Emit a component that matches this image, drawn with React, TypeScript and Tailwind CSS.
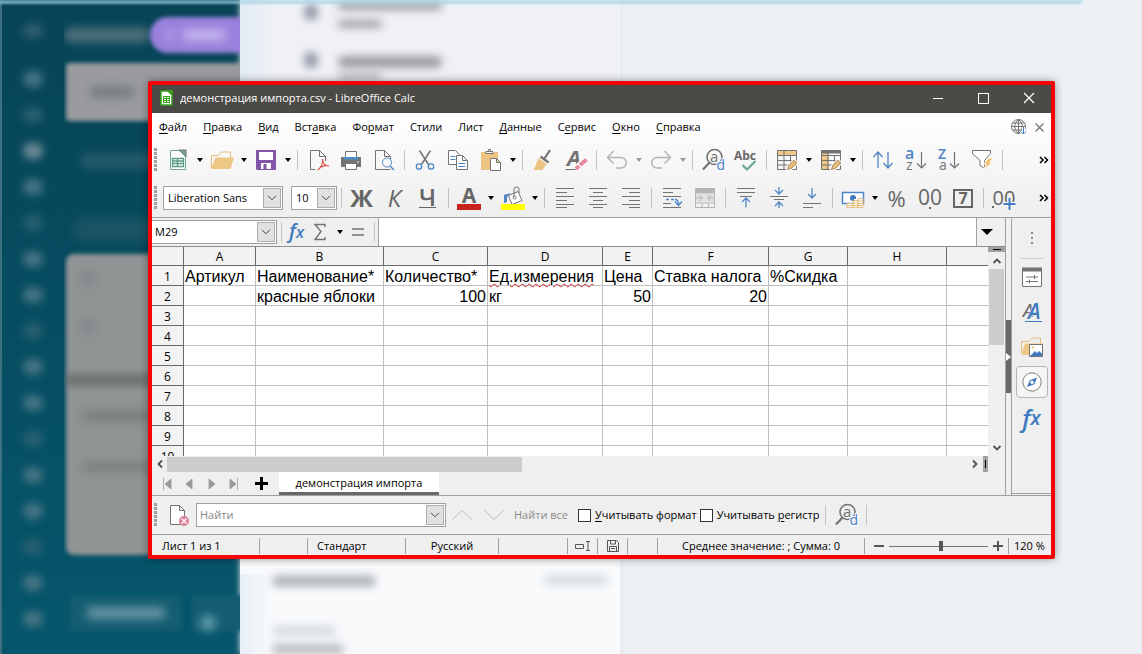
import type { ReactNode } from 'react';
import clsx from 'clsx';

const menus = [
  ['', 'Ф', 'айл'],
  ['', 'П', 'равка'],
  ['', 'В', 'ид'],
  ['Вст', 'а', 'вка'],
  ['Фо', 'р', 'мат'],
  ['Стили', '', ''],
  ['Лист', '', ''],
  ['', 'Д', 'анные'],
  ['С', 'е', 'рвис'],
  ['', 'О', 'кно'],
  ['', 'С', 'правка'],
];

const columns = ['A', 'B', 'C', 'D', 'E', 'F', 'G', 'H', ''];

const rows: Array<Array<string | number>> = [
  ['Артикул', 'Наименование*', 'Количество*', 'Ед.измерения', 'Цена', 'Ставка налога', '%Скидка', '', ''],
  ['', 'красные яблоки', 100, 'кг', 50, 20, '', '', ''],
  ...Array.from({ length: 8 }, () => Array(9).fill('')),
];

interface IconProps {
  children: ReactNode;
  box?: string;
  className?: string;
}

function Icon({ children, box = '0 0 24 24', className = 'size-6' }: IconProps) {
  return (
    <svg viewBox={box} className={clsx('shrink-0 overflow-visible', className)} fill="none" stroke="#737373" aria-hidden="true">
      {children}
    </svg>
  );
}

function Caret({ disabled }: { disabled?: boolean }) {
  return (
    <svg viewBox="0 0 6 4" className="h-1 w-1.5" aria-hidden="true">
      <path d="M0 0h6L3 4z" fill={disabled ? '#9a9a9a' : '#000'} />
    </svg>
  );
}

interface ToolProps {
  label: string;
  children: ReactNode;
  menu?: boolean;
  disabled?: boolean;
}

function Tool({ label, children, menu, disabled }: ToolProps) {
  return (
    <div className="flex shrink-0">
      <button type="button" aria-label={label} disabled={disabled} className="flex h-8 w-[33px] items-center justify-center">
        {children}
      </button>
      {menu && (
        <button type="button" aria-label={`${label}: меню`} disabled={disabled} className="flex h-8 w-[11px] items-center justify-center">
          <Caret disabled={disabled} />
        </button>
      )}
    </div>
  );
}

function Separator() {
  return (
    <div className="flex w-2 shrink-0 justify-center">
      <div className="h-5 w-px bg-[#c3c3c3]" />
    </div>
  );
}

function Grip() {
  return (
    <div className="flex w-[9px] shrink-0 pl-0.5">
      <div className="h-6 w-[3px] bg-[repeating-linear-gradient(#a0a0a0_0_3px,transparent_3px_4px)]" />
    </div>
  );
}

function DropArrow() {
  return (
    <span className="pointer-events-none flex h-5 w-[18px] items-center justify-center border border-[#adadad] bg-[#e1e1e1]">
      <svg viewBox="0 0 10 6" className="h-1.5 w-2.5" fill="none" stroke="#444" aria-hidden="true">
        <path d="M1 .8l4 4 4-4" />
      </svg>
    </span>
  );
}

function Combo({ label, value, className }: { label: string; value: string; className: string }) {
  return (
    <div className={clsx('relative flex h-6 shrink-0 items-center border border-[#a0a0a0] bg-white', className)}>
      <select aria-label={label} defaultValue={value} className="h-full w-full appearance-none bg-transparent pl-1 outline-none">
        <option>{value}</option>
      </select>
      <span className="pointer-events-none absolute right-px">
        <DropArrow />
      </span>
    </div>
  );
}

function FindReplaceIcon() {
  return (
    <Icon>
      <circle cx="13.500" cy="9" r="7.500" strokeWidth="1.600" />
      <path d="M8.500 14.500L2 21.500" strokeWidth="2.200" />
      <text x="9" y="13.500" fontSize="15" fill="#737373" stroke="none" className="font-['Open_Sans',sans-serif]">a</text>
      <text x="15.500" y="22" fontSize="14" fill="#3f7ac0" stroke="#fff" strokeWidth="2" paintOrder="stroke" className="font-['Open_Sans',sans-serif]">d</text>
    </Icon>
  );
}

function TableEditIcon({ column }: { column?: boolean }) {
  return (
    <Icon>
      {column ? <path d="M2 3h8v19H2z" fill="#ecc785" stroke="none" /> : <path d="M2 3h20v4H2z" fill="#ecc785" stroke="none" />}
      {column && <path d="M2 2.500h20v3H2z" fill="#737373" stroke="none" />}
      <path d="M2.500 2.500h19v19h-19zM2.500 7.500h19M2.500 12.500h19M2.500 17h19M9 3v18.500M15.500 7v14.500" />
      <path d="M12 22l1.500-5 5.500-5.500 3.500 3.500-5.500 5.500z" fill="#ecc785" stroke="#fff" strokeWidth="2" paintOrder="stroke" />
      <path d="M12.500 21.500l1.200-4 5.300-5.300 2.800 2.800-5.300 5.300z" fill="#e8bd7b" stroke="#8b7862" strokeWidth=".7" />
    </Icon>
  );
}

function SortLetters({ first, second, size }: { first: string; second: string; size: number }) {
  return (
    <Icon>
      <text x="1" y="11" fontSize={size} fontWeight="600" fill="#4e86c6" stroke="none" className="font-['Open_Sans',sans-serif]">{first}</text>
      <text x="2" y="22" fontSize="14" fill="#737373" stroke="none" className="font-['Open_Sans',sans-serif]">{second}</text>
      <path d="M17.500 4v16M13 15.500l4.500 4.500 4.500-4.500" strokeWidth="1.200" />
    </Icon>
  );
}

const lines = {
  left: 'M3 2.500h18M3 6.500h11M3 10.500h18M3 14.500h11M3 18.500h18M3 21.500h11',
  center: 'M3 2.500h18M7 6.500h10M3 10.500h18M7 14.500h10M3 18.500h18M7 21.500h10',
  right: 'M3 2.500h18M10 6.500h11M3 10.500h18M10 14.500h11M3 18.500h18M10 21.500h11',
};

function Lines({ align }: { align: keyof typeof lines }) {
  return (
    <Icon>
      <path d={lines[align]} />
    </Icon>
  );
}

function TitleBar() {
  return (
    <header className="flex h-7 items-center bg-[#4b4a46] pb-0.5 pl-2 text-white">
      <svg viewBox="0 0 13 16" className="h-4 w-[13px]" aria-hidden="true">
        <path d="M1 1h7l4 4v10H1z" fill="#fff" stroke="#37a41c" strokeWidth="1.500" />
        <path d="M8 0h5v5z" fill="#37a41c" />
        <path d="M3 6.500h7M3 8.500h7M3 10.500h7M3 12.500h7M3.500 6v7M6.500 6v7M9.500 6v7" stroke="#37a41c" />
      </svg>
      <h1 className="ml-[7px] flex-1 truncate">демонстрация импорта.csv - LibreOffice Calc</h1>
      <div className="flex h-full">
        <button type="button" aria-label="Свернуть" className="flex w-[45px] items-center justify-center">
          <span className="h-px w-2.5 bg-white" />
        </button>
        <button type="button" aria-label="Развернуть" className="flex w-[46px] items-center justify-center">
          <span className="size-[11px] border border-white" />
        </button>
        <button type="button" aria-label="Закрыть" className="flex w-[45px] items-center justify-center">
          <Icon box="0 0 10 10" className="size-2.5"><path d="M0 0l10 10M10 0L0 10" stroke="#fff" strokeWidth="1.200" /></Icon>
        </button>
      </div>
    </header>
  );
}

function MenuBar() {
  return (
    <nav className="flex h-7 items-center pl-[7px]">
      <div className="flex flex-1 gap-4">
        {menus.map(([before, key, after]) => (
          <button type="button" key={before + key + after}>
            {before}
            <span className="underline underline-offset-2">{key}</span>
            {after}
          </button>
        ))}
      </div>
      <button type="button" aria-label="Обновление">
        <Icon box="0 0 16 16" className="size-4">
          <circle cx="7.500" cy="7.500" r="7" />
          <path d="M.5 7.500h14M7.500.5v14M1.500 4h12M1.500 11h9M7.500.5c-5 4-5 10 0 14M7.500.5c5 4 5 10 0 14" />
          <path d="M12.500 8v7M10 12.500l2.500 2.500 2.500-2.500" stroke="#fff" strokeWidth="3" />
          <path d="M12.500 8v7M10 12.500l2.500 2.500 2.500-2.500" stroke="#3f7ac0" />
        </Icon>
      </button>
      <button type="button" aria-label="Закрыть документ" className="mr-[7px] ml-2">
        <Icon box="0 0 9 9" className="size-[9px]"><path d="M.5.5l8 8M8.500.5l-8 8" strokeWidth="1.200" /></Icon>
      </button>
    </nav>
  );
}

function OverflowButton() {
  return (
    <button type="button" aria-label="Ещё" className="mr-0.5 ml-auto">
      <Icon box="0 0 10 8" className="h-2 w-2.5">
        <path d="M1 1l3 3-3 3M5.500 1l3 3-3 3" stroke="#000" strokeWidth="1.500" />
      </Icon>
    </button>
  );
}

function StandardToolbar() {
  return (
    <div className="flex h-[37px] items-center">
      <Grip />
      <Tool label="Создать" menu>
        <Icon>
          <path d="M4.500 2.500h9l6 6v13h-15z" fill="#fff" stroke="#6fa793" />
          <path d="M13 2h7v7z" fill="#6fa793" />
          <path d="M6.500 10.500h11v8h-11zM7 13h10M7 15.500h10M11.500 11v7" stroke="#5c9b84" strokeWidth="1.300" />
        </Icon>
      </Tool>
      <Tool label="Открыть" menu>
        <Icon>
          <path d="M1.500 20V7.500h7l3-3.500h9v6" stroke="#e5bd7c" />
          <path d="M5.500 9.500H24L20.500 21H1z" fill="#edc785" stroke="none" />
        </Icon>
      </Tool>
      <Tool label="Сохранить" menu>
        <Icon>
          <path d="M2 2h20v20H3l-1-1z" fill="#8357a8" stroke="none" />
          <path d="M5 4h14v8H5zM7 15h10v6H7z" fill="#fff" stroke="none" />
          <path d="M9.500 16h3v5h-3z" fill="#8357a8" stroke="none" />
        </Icon>
      </Tool>
      <Separator />
      <Tool label="Экспорт в PDF">
        <Icon>
          <path d="M9 21.500H4.500v-19h9l6 6V13M13.500 2.500v6h6" />
          <path d="M12 22c3.500-3 5-7 4.500-11 .5 5 3 7 6.500 7-4-1-8 0-11 4z" stroke="#e2574c" strokeWidth="1.200" />
        </Icon>
      </Tool>
      <Tool label="Печать">
        <Icon>
          <path d="M2 9h20v10H2z" fill="#737373" stroke="none" />
          <path d="M6.500 10V3.500h11V10M6.500 15.500h11v6h-11z" fill="#fff" />
          <path d="M5 9h14v2.500H5z" fill="#4d8fcc" stroke="none" />
          <path d="M18 14h2" stroke="#fff" />
        </Icon>
      </Tool>
      <Tool label="Просмотр печати">
        <Icon>
          <path d="M18.500 21.500h-15v-19h9l6 6V11M12.500 2.500v6h6" />
          <circle cx="15" cy="14.500" r="4.500" fill="#f6f9fd" stroke="#4e86c6" />
          <path d="M18 18l4 4" stroke="#4e86c6" strokeWidth="1.500" />
        </Icon>
      </Tool>
      <Separator />
      <Tool label="Вырезать">
        <Icon>
          <path d="M6.500 2.500l9 14M17.500 2.500l-9 14" strokeWidth="1.500" />
          <circle cx="6" cy="18.500" r="2.700" stroke="#4e86c6" strokeWidth="1.300" />
          <circle cx="18" cy="18.500" r="2.700" stroke="#4e86c6" strokeWidth="1.300" />
        </Icon>
      </Tool>
      <Tool label="Копировать">
        <Icon>
          <path d="M2.500 2.500h7l4 4v10h-11z" fill="#fff" />
          <path d="M4.500 8.500h5M4.500 11.500h5" stroke="#4e86c6" />
          <path d="M10.500 7.500h6l5 5v9h-11zM16.500 7.500v5h5" fill="#fff" />
          <path d="M12.500 15.500h7M12.500 18.500h7" stroke="#4e86c6" />
        </Icon>
      </Tool>
      <Tool label="Вставить" menu>
        <Icon>
          <path d="M2 4h17v18H2z" fill="#ecc383" stroke="none" />
          <path d="M7 5.500V3.500h7v2zM9.500 3V1.500h2V3" fill="#fff" />
          <path d="M11.500 10.500h6l4 4v8h-10zM17.500 10.500v4h4" fill="#fff" />
        </Icon>
      </Tool>
      <Separator />
      <Tool label="Копировать форматирование">
        <Icon>
          <path d="M19 2l-5.500 8.500M9.500 8.500l8 6" strokeWidth="2.200" />
          <path d="M7.500 10l8 6-4 6H2.500c2-3 3-8 5-12z" fill="#ecc383" stroke="none" />
        </Icon>
      </Tool>
      <Tool label="Очистить форматирование">
        <Icon>
          <path d="M1.500 21.500h10" />
          <text x="3" y="18" fontSize="22" fontWeight="700" fontStyle="italic" fill="#737373" stroke="none" className="font-['Open_Sans',sans-serif]">A</text>
          <path d="M12 20.500l9-8.500" stroke="#fff" strokeWidth="6" />
          <path d="M12 21l3-3M16 17l6.500-5.500" stroke="#e88b9b" strokeWidth="4" />
        </Icon>
      </Tool>
      <Separator />
      <Tool label="Отменить" menu disabled>
        <Icon><path d="M8.500 3L2.500 9.500l6 6M3 9.500h13a5 5 0 0 1 0 10.500h-5" stroke="#b4b4b4" strokeWidth="1.500" /></Icon>
      </Tool>
      <Tool label="Вернуть" menu disabled>
        <Icon><path d="M15.500 3l6 6.500-6 6M21 9.500H8A5 5 0 0 0 8 20h5" stroke="#b4b4b4" strokeWidth="1.500" /></Icon>
      </Tool>
      <Separator />
      <Tool label="Найти и заменить"><FindReplaceIcon /></Tool>
      <Tool label="Проверка орфографии">
        <Icon>
          <text x="0" y="12" fontSize="12" fontWeight="700" fill="#666" stroke="none" className="font-['Open_Sans',sans-serif]">Abc</text>
          <path d="M8.500 17l4.500 4.500L21.500 13" stroke="#6fa793" strokeWidth="2.200" />
        </Icon>
      </Tool>
      <Separator />
      <Tool label="Строка" menu><TableEditIcon /></Tool>
      <Tool label="Столбец" menu><TableEditIcon column /></Tool>
      <Separator />
      <Tool label="Сортировка">
        <Icon><path d="M7 20V4M2.500 9L7 4l4.500 5M17 4v16M12.500 15l4.500 5 4.500-5" stroke="#4e86c6" strokeWidth="1.300" /></Icon>
      </Tool>
      <Tool label="По возрастанию"><SortLetters first="a" second="z" size={16} /></Tool>
      <Tool label="По убыванию"><SortLetters first="Z" second="a" size={14} /></Tool>
      <Tool label="Автофильтр">
        <Icon>
          <path d="M2.500 2.500h18v3l-6 7v8l-4.500-3v-5l-7.500-7z" fill="#fff" />
          <path d="M19 10h4l-3.500 4.500h3L12.500 22.500l4-6.500h-3z" fill="#efbf68" stroke="#fff" strokeWidth=".8" />
        </Icon>
      </Tool>
      <Separator />
      <OverflowButton />
    </div>
  );
}

function FormattingToolbar() {
  return (
    <div className="flex h-10 items-center border-b border-[#a0a0a0]">
      <Grip />
      <Combo label="Шрифт" value="Liberation Sans" className="ml-0.5 w-[120px]" />
      <Combo label="Размер" value="10" className="ml-2 w-[46px]" />
      <Separator />
      <Tool label="Полужирный"><span className="text-2xl leading-none font-bold text-[#666]">Ж</span></Tool>
      <Tool label="Курсив"><span className="text-2xl leading-none font-medium text-[#666] italic">К</span></Tool>
      <Tool label="Подчёркнутый"><span className="border-b border-[#666] text-2xl leading-5 font-semibold text-[#666]">Ч</span></Tool>
      <Separator />
      <Tool label="Цвет шрифта" menu>
        <Icon>
          <text x="12" y="17" fontSize="21" fontWeight="700" fill="#666" stroke="none" textAnchor="middle" className="font-['Open_Sans',sans-serif]">A</text>
          <path d="M0 18h24v6H0z" fill="#c9211e" stroke="none" />
        </Icon>
      </Tool>
      <Tool label="Цвет фона" menu>
        <Icon>
          <path d="M3 17V9l7-2-4 4v5z" fill="#4e86c6" stroke="none" />
          <path d="M7.500 9.500L17 5.500l4 9-10 4z" fill="#fff" />
          <path d="M13 11V4a2.500 2.500 0 0 1 5-1v4" />
          <circle cx="13.500" cy="11.500" r="1.500" />
          <path d="M0 18h24v6H0z" fill="#ff0" stroke="none" />
        </Icon>
      </Tool>
      <Separator />
      <Tool label="По левому краю"><Lines align="left" /></Tool>
      <Tool label="По центру"><Lines align="center" /></Tool>
      <Tool label="По правому краю"><Lines align="right" /></Tool>
      <Separator />
      <Tool label="Перенос текста">
        <Icon>
          <path d="M3 2.500h18M3 6.500h10M3 10.500h18M3 17.500h8M3 21.500h18" />
          <path d="M6 13.500h3M11 13.500h3M15 13.500c3 0 3.500 2 3.500 5M15 15.500l3.500 4 3.500-4" stroke="#4e86c6" strokeWidth="1.300" />
        </Icon>
      </Tool>
      <Tool label="Объединить ячейки" disabled>
        <Icon>
          <path d="M2 2.500h20V7H2z" fill="#b5b5b5" stroke="none" />
          <path d="M2.500 2.500h19v19h-19zM2.500 7h19M2.500 17h19M9 17v4.500M15.500 17v4.500M9 3v4M15.500 3v4" stroke="#b5b5b5" />
          <path d="M3 8h18v8H3z" fill="#e2e2e2" stroke="none" />
          <path d="M3 12h6M6.500 9L9.500 12l-3 3M21 12h-6M17.500 9l-3 3 3 3" stroke="#b0b0b0" />
        </Icon>
      </Tool>
      <Separator />
      <Tool label="По верхнему краю">
        <Icon><path d="M3 2.500h18M3 6.500h18M6 10.500h12" /><path d="M12 21.500v-9M8 16l4-4 4 4" stroke="#4e86c6" strokeWidth="1.300" /></Icon>
      </Tool>
      <Tool label="По середине">
        <Icon><path d="M3 10.500h18M7 13.500h10" /><path d="M12 1v7M8 4l4 4 4-4M12 22v-6M8 20l4-4 4 4" stroke="#4e86c6" strokeWidth="1.300" /></Icon>
      </Tool>
      <Tool label="По нижнему краю">
        <Icon><path d="M3 17.500h18M3 21.500h10" /><path d="M12 2v10M8 8l4 4 4-4" stroke="#4e86c6" strokeWidth="1.300" /></Icon>
      </Tool>
      <Separator />
      <Tool label="Денежный" menu>
        <Icon>
          <path d="M1.500 6.500h21v11h-21z" fill="#fff" stroke="#4e86c6" strokeWidth="1.500" />
          <circle cx="12" cy="12" r="3" fill="#3f7ac0" stroke="none" />
          <path d="M13 13h9v9H6v-5h7z" fill="#fff" stroke="none" />
          <path d="M6 17.500h6v4H6zM6 19.500h6M12.500 14.500h4v7h-4zM12.500 17h4M12.500 19.500h4M17 12.500h5v9h-5zM17 15h5M17 17.500h5M17 19.500h5" stroke="#e5bd7c" />
        </Icon>
      </Tool>
      <Tool label="Процентный"><span className="text-[22px] leading-none font-medium text-[#666]">%</span></Tool>
      <Tool label="Числовой">
        <Icon>
          <text x="12" y="19" fontSize="21" fill="#666" stroke="none" textAnchor="middle" className="font-['Open_Sans',sans-serif]">00</text>
          <path d="M11 21h2v2h-2z" fill="#666" stroke="none" />
        </Icon>
      </Tool>
      <Tool label="Дата">
        <Icon>
          <path d="M3 4h18v17H3z" strokeWidth="2" stroke="#666" />
          <text x="12" y="18" fontSize="16" fontWeight="700" fill="#666" stroke="none" textAnchor="middle" className="font-['Open_Sans',sans-serif]">7</text>
        </Icon>
      </Tool>
      <Separator />
      <Tool label="Добавить разряд">
        <Icon>
          <text x="12" y="19" fontSize="20" fill="#666" stroke="none" textAnchor="middle" className="font-['Open_Sans',sans-serif]">00</text>
          <path d="M0 20h2v2H0z" fill="#666" stroke="none" />
          <path d="M17.500 12v12M11.500 18h12" stroke="#fff" strokeWidth="4" />
          <path d="M17.500 12v12M11.500 18h12" stroke="#3f7ac0" strokeWidth="2" />
        </Icon>
      </Tool>
      <OverflowButton />
    </div>
  );
}

function FormulaBar() {
  return (
    <div className="flex h-[29px] items-center border-b border-[#8f8f8f]">
      <div className="relative flex h-6 w-[125px] shrink-0 items-center border border-l-0 border-[#a0a0a0] bg-white">
        <input aria-label="Имя ячейки" defaultValue="M29" className="w-full bg-transparent pl-[3px] outline-none" />
        <button type="button" aria-label="Список имён" className="absolute right-px">
          <DropArrow />
        </button>
      </div>
      <Separator />
      <button type="button" aria-label="Мастер функций" className="w-[23px] text-xl leading-none font-semibold text-[#3f7ac0] italic">
        f<span className="text-base">x</span>
      </button>
      <button type="button" aria-label="Сумма" className="flex w-6 justify-center">
        <Icon box="0 0 14 18" className="h-[18px] w-3.5"><path d="M12 4V1.500H2l6 7-6 8h10V14" strokeWidth="1.400" /></Icon>
      </button>
      <button type="button" aria-label="Сумма: меню" className="flex w-4 justify-center"><Caret /></button>
      <button type="button" aria-label="Формула" className="flex w-5 justify-center">
        <Icon box="0 0 12 8" className="h-2 w-3"><path d="M0 1h12M0 7h12" strokeWidth="1.600" /></Icon>
      </button>
      <div className="ml-0.5"><Separator /></div>
      <input aria-label="Строка ввода" className="h-full min-w-0 flex-1 border-x border-[#a0a0a0] bg-white px-1 outline-none" />
      <button type="button" aria-label="Развернуть строку ввода" className="flex w-7 pl-1">
        <svg viewBox="0 0 10 5" className="h-1.5 w-3" aria-hidden="true"><path d="M0 0h10L5 5z" /></svg>
      </button>
    </div>
  );
}

function Sheet() {
  return (
    <div className="min-w-0 flex-1 overflow-hidden bg-white">
      <table className="w-full table-fixed border-separate border-spacing-0 text-xs">
        <colgroup>
          <col className="w-8" />
          <col className="w-[72px]" />
          <col className="w-[128px]" />
          <col className="w-[104px]" />
          <col className="w-[115px]" />
          <col className="w-[50px]" />
          <col className="w-[116px]" />
          <col className="w-[79px]" />
          <col className="w-[99px]" />
          <col />
        </colgroup>
        <thead>
          <tr className="h-[19px] bg-[#f2f2f2]">
            <th className="border-r border-b border-[#696969] p-0" />
            {columns.map((name, i) => (
              <th key={i} className={clsx('border-b border-[#696969] p-0 pt-0.5 leading-4 font-normal', name && 'border-r')}>
                {name}
              </th>
            ))}
          </tr>
        </thead>
        <tbody>
          {rows.map((cells, r) => (
            <tr key={r} className="h-5">
              <th className="border-r border-b border-[#696969] bg-[#f2f2f2] p-0 pt-0.5 leading-[17px] font-normal">{r + 1}</th>
              {cells.map((cell, c) => (
                <td
                  key={c}
                  className={clsx(
                    "border-b border-[#c0c0c0] p-0 px-px pt-0.5 font-['Liberation_Sans',sans-serif] text-base leading-[17px] whitespace-nowrap",
                    c < 8 && 'border-r',
                    typeof cell === 'number' && 'text-right',
                  )}
                >
                  {cell === 'Ед.измерения' ? (
                    <span className="underline decoration-[#d02020] decoration-wavy decoration-1 underline-offset-1">{cell}</span>
                  ) : (
                    cell
                  )}
                </td>
              ))}
            </tr>
          ))}
        </tbody>
      </table>
    </div>
  );
}

function Chevron({ d }: { d: string }) {
  return (
    <Icon box="0 0 8 8" className="size-2"><path d={d} stroke="#505050" strokeWidth="1.800" /></Icon>
  );
}

function VerticalScroll() {
  return (
    <div className="flex w-[17px] shrink-0 flex-col items-center">
      <div className="flex h-[5px] w-full items-center justify-center bg-[#a0a0a0]"><span className="h-px w-2 bg-black" /></div>
      <button type="button" aria-label="Вверх" className="flex h-[17px] items-center"><Chevron d="M.5 6L4 2.500 7.500 6" /></button>
      <div className="h-[76px] w-[15px] bg-[#cdcdcd]" />
      <button type="button" aria-label="Вниз" className="mt-auto flex h-[17px] items-center"><Chevron d="M.5 2L4 5.500 7.500 2" /></button>
    </div>
  );
}

function HorizontalScroll() {
  return (
    <div className="flex h-4 items-center pr-[17px]">
      <button type="button" aria-label="Влево" className="flex w-[15px] justify-center"><Chevron d="M6 .5L2.500 4 6 7.500" /></button>
      <div className="flex h-full flex-1 items-end">
        <div className="h-[15px] w-[44.4%] bg-[#cdcdcd]" />
      </div>
      <button type="button" aria-label="Вправо" className="flex w-4 justify-center"><Chevron d="M2 .5L5.500 4 2 7.500" /></button>
      <div className="flex h-full w-[5px] items-center justify-center bg-[#a0a0a0]"><span className="h-2 w-px bg-black" /></div>
    </div>
  );
}

function SheetTabs() {
  const steps = [
    ['Первый лист', 'M2.500 1v12M10 2L4 7l6 5z'],
    ['Предыдущий лист', 'M9 2L3 7l6 5z'],
    ['Следующий лист', 'M4 2l6 5-6 5z'],
    ['Последний лист', 'M3 2l6 5-6 5zM10.500 1v12'],
  ];

  return (
    <div className="flex h-[23px] items-center pl-[9px]">
      {steps.map(([label, d]) => (
        <button type="button" key={label} aria-label={label} className="mr-2 shrink-0">
          <Icon box="0 0 14 14" className="size-3.5"><path d={d} fill="#999" stroke="#999" strokeWidth=".8" /></Icon>
        </button>
      ))}
      <button type="button" aria-label="Добавить лист" className="mx-1.5">
        <Icon box="0 0 13 13" className="size-[13px]"><path d="M6.500 0v13M0 6.500h13" stroke="#000" strokeWidth="3" /></Icon>
      </button>
      <button type="button" className="ml-[5px] h-full w-40 border-b-[3px] border-[#696969] bg-white pt-0.5">демонстрация импорта</button>
    </div>
  );
}

function Sidebar() {
  return (
    <aside className="mb-px flex w-[39px] shrink-0 flex-col items-center border-b border-[#a0a0a0]">
      <button type="button" aria-label="Параметры боковой панели" className="flex h-10 items-center">
        <Icon box="0 0 4 14" className="h-3.5 w-1">
          <path d="M1 1h2v2H1zM1 6h2v2H1zM1 11h2v2H1z" fill="#8a8a8a" stroke="none" />
        </Icon>
      </button>
      <div className="h-px w-6 bg-[#d0d0d0]" />
      <button type="button" aria-label="Свойства" className="flex h-[35px] w-8 items-center justify-center">
        <Icon>
          <path d="M2.500 3.500h19v18h-19z" fill="#fff" />
          <path d="M2 2.500h20v4H2z" fill="#737373" stroke="none" />
          <path d="M6 12h12M6 16.500h12M14.500 10v4M9.500 14.500v4" />
        </Icon>
      </button>
      <button type="button" aria-label="Стили" className="flex h-[35px] w-8 items-center justify-center">
        <Icon>
          <text x="3" y="17" fontSize="19" fontStyle="italic" fill="#666" stroke="none" className="font-['Open_Sans',sans-serif]">A</text>
          <text x="8" y="19" fontSize="21" fontWeight="600" fontStyle="italic" fill="#3f7ac0" stroke="#efefef" strokeWidth="1" paintOrder="stroke" className="font-['Open_Sans',sans-serif]">A</text>
          <path d="M5 21.500h17" stroke="#3f7ac0" />
        </Icon>
      </button>
      <button type="button" aria-label="Галерея" className="flex h-[35px] w-8 items-center justify-center">
        <Icon>
          <path d="M1.500 18V6.500h7l3-3.500h9v6" stroke="#e5bd7c" />
          <path d="M5 8.500h18L20 20H1z" fill="#edc785" stroke="none" />
          <path d="M9.500 9.500h13v12h-13z" fill="#fff" />
          <path d="M10 21l5-5 2 2 2.500-2 2.500 3v2z" fill="#3f7ac0" stroke="none" />
          <circle cx="13" cy="12.500" r="1.200" fill="#edc785" stroke="none" />
        </Icon>
      </button>
      <button type="button" aria-label="Навигатор" className="my-0.5 flex size-8 items-center justify-center rounded-sm border border-[#b5b5b5] bg-[#f4f4f4]">
        <Icon className="size-[22px]">
          <circle cx="12" cy="12" r="10" fill="#fff" />
          <path d="M17.500 7l-3 7.500-8 3 3-7.500z" fill="#3f7ac0" stroke="none" />
          <circle cx="12" cy="12.200" r="1.900" fill="#fff" stroke="none" />
        </Icon>
      </button>
      <button type="button" aria-label="Функции" className="flex h-[35px] w-8 items-center justify-center text-2xl leading-none font-semibold text-[#3f7ac0] italic">
        f<span className="text-xl">x</span>
      </button>
    </aside>
  );
}

function FindBar() {
  return (
    <div className="flex h-[39px] items-center border-t border-[#a0a0a0]">
      <Grip />
      <button type="button" aria-label="Закрыть панель поиска" className="mr-[5px] ml-1.5">
        <Icon>
          <path d="M3.500 2.500h9l5 5v14h-14zM12.500 2.500v5h5" fill="#fff" />
          <circle cx="17" cy="18" r="5" fill="#dd8196" stroke="none" />
          <path d="M14.500 15.500l5 5M19.500 15.500l-5 5" stroke="#fff" strokeWidth="1.300" />
        </Icon>
      </button>
      <div className="relative flex h-6 w-[250px] shrink-0 items-center border border-[#a0a0a0] bg-white">
        <input aria-label="Найти" placeholder="Найти" className="w-full bg-transparent pl-[3px] outline-none placeholder:text-[#858585]" />
        <button type="button" aria-label="История поиска" className="absolute right-px"><DropArrow /></button>
      </div>
      <button type="button" aria-label="Найти предыдущее" className="ml-1.5">
        <Icon box="0 0 20 12" className="h-3 w-5"><path d="M.5 10.500L10 1.500l9.500 9" stroke="#bdbdbd" /></Icon>
      </button>
      <button type="button" aria-label="Найти следующее" className="ml-3">
        <Icon box="0 0 20 12" className="h-3 w-5"><path d="M.5 1.500l9.500 9 9.500-9" stroke="#bdbdbd" /></Icon>
      </button>
      <button type="button" className="ml-2.5 w-16 text-left text-[#8a8a8a]">Найти все</button>
      <label className="mr-[3px] flex items-center gap-1 whitespace-nowrap">
        <input type="checkbox" className="size-[13px] appearance-none border border-[#333] bg-white checked:bg-[#333]" />
        <span><u className="underline-offset-2">У</u>читывать формат</span>
      </label>
      <label className="mr-0.5 flex items-center gap-1 whitespace-nowrap">
        <input type="checkbox" className="size-[13px] appearance-none border border-[#333] bg-white checked:bg-[#333]" />
        <span>Учитывать <u className="underline-offset-2">р</u>егистр</span>
      </label>
      <Separator />
      <Tool label="Найти и заменить"><FindReplaceIcon /></Tool>
      <Separator />
    </div>
  );
}

function StatusBar() {
  return (
    <footer className="flex h-[21px] items-center border-t border-[#a0a0a0] pt-0.5 whitespace-nowrap *:flex *:h-4 *:items-center *:border-[#a0a0a0]">
      <div className="w-[108px] border-r pl-2.5">Лист 1 из 1</div>
      <div className="w-12 border-r" />
      <div className="w-[98px] border-r pl-[9px]">Стандарт</div>
      <div className="w-[93px] justify-center border-r">Русский</div>
      <div className="w-[69px] border-r" />
      <div className="w-[30px] justify-center border-r">
        <Icon box="0 0 16 10" className="h-2.5 w-4"><path d="M.5 3.500h8v4h-8zM11 .5h4M11 9.500h4M13 .5v9" stroke="#555" /></Icon>
      </div>
      <div className="w-[30px] justify-center border-r">
        <Icon box="0 0 12 12" className="size-3"><path d="M.5.5h9l2 2v9H.5zM3.500 1v3h5V1M2.500 11V6.500h7V11M4 8.500h4" stroke="#555" /></Icon>
      </div>
      <div className="w-[30px] border-r" />
      <div className="flex-1 justify-center border-r">Среднее значение: ; Сумма: 0</div>
      <div className="w-36 gap-[5px] border-r pl-[9px]">
        <button type="button" aria-label="Уменьшить масштаб" className="flex h-4 w-2.5 items-center"><span className="h-0.5 w-full bg-[#555]" /></button>
        <input
          type="range"
          aria-label="Масштаб"
          defaultValue={53}
          className="h-3 w-[99px] appearance-none bg-[linear-gradient(#737373,#737373)] bg-[length:100%_1px] bg-center bg-no-repeat [&::-webkit-slider-thumb]:h-2.5 [&::-webkit-slider-thumb]:w-1 [&::-webkit-slider-thumb]:appearance-none [&::-webkit-slider-thumb]:bg-[#555]"
        />
        <button type="button" aria-label="Увеличить масштаб" className="flex h-4 items-center">
          <Icon box="0 0 10 10" className="size-2.5"><path d="M5 0v10M0 5h10" stroke="#555" strokeWidth="2" /></Icon>
        </button>
      </div>
      <div className="w-[42px] pl-[5px]">120 %</div>
    </footer>
  );
}

function Smudge({ className }: { className: string }) {
  return <div className={clsx('shrink-0 rounded-full blur-[4px]', className)} />;
}

// Out-of-focus page behind the window
function Backdrop() {
  return (
    <div aria-hidden="true" className="absolute inset-0 flex overflow-hidden bg-[#edf1f5]">
      <div className="flex w-60 shrink-0 bg-linear-to-b from-[#074457] to-[#05566c]">
        <div className="flex w-16 flex-col items-center border-l-2 border-[#3d7081] pt-6">
          <Smudge className="mb-[33px] h-3.5 w-5 bg-[#315f6e]" />
          <div className="flex flex-col gap-5">
            {Array.from({ length: 16 }, (_, i) => (
              <Smudge key={i} className={clsx('h-4 w-5', i === 2 ? 'bg-[#6e8b95]' : i % 3 === 1 ? 'bg-[#286070]' : 'bg-[#467583]')} />
            ))}
          </div>
        </div>
        <div className="flex min-w-0 flex-1 flex-col overflow-hidden pt-[17px]">
          <div className="flex items-center">
            <Smudge className="h-4 w-[86px] bg-[#4a6c78]" />
            <div className="-mr-3 flex h-9 flex-1 items-center gap-2 rounded-l-full bg-[#9a80dc] pl-4 blur-[2px]">
              <Smudge className="size-2 bg-[#c4b3ef]" />
              <Smudge className="h-2.5 w-11 bg-[#cabcf2]" />
            </div>
          </div>
          <div className="-mr-3 mt-2.5 ml-0.5 h-[58px] shrink-0 rounded bg-[#999b9e] px-6 pt-6 blur-[2px]">
            <Smudge className="h-2.5 w-11 bg-[#74787b]" />
          </div>
          <Smudge className="mt-8 ml-4 h-4 w-20 bg-[#24596a]" />
          <Smudge className="mt-[49px] ml-2 h-6 w-40 bg-[#1a5364]" />
          <div className="-mr-3 mt-3 ml-0.5 flex h-[301px] shrink-0 flex-col rounded-lg bg-[#919495] blur-[2px]">
            <Smudge className="mt-4 ml-4 h-4 w-3 bg-[#808486]" />
            <Smudge className="mt-8 ml-4 h-4 w-3 bg-[#808486]" />
            <div className="mt-10 h-3 bg-[#6f7273] blur-[3px]" />
            <Smudge className="mt-6 ml-4 h-3 w-20 bg-[#7b7f80]" />
            <Smudge className="mt-10 ml-4 h-2.5 w-20 bg-[#7b7f80]" />
          </div>
          <div className="mt-10 ml-1.5 flex gap-2.5">
            <div className="flex h-9 w-28 shrink-0 items-center justify-center bg-[#145c70] blur-[2px]">
              <Smudge className="h-3 w-20 bg-[#6896a4]" />
            </div>
            <div className="flex h-9 w-20 shrink-0 items-end bg-[#145c70] pl-2 blur-[2px]">
              <Smudge className="size-4 bg-[#62a0b0]" />
            </div>
          </div>
        </div>
      </div>
      <div className="flex w-[380px] shrink-0 flex-col justify-between bg-linear-to-b from-[#f0f1f6] from-50% to-[#f8fafc] to-60% shadow-[0_0_6px_#dfe4ea]">
        <div className="flex gap-5 bg-linear-to-r from-[#e3edf4] to-transparent to-10% pl-16">
          <div>
            <Smudge className="mt-1 h-4 w-3.5 bg-[#8d93a3]" />
            <Smudge className="mt-8 h-4 w-3.5 bg-[#8d93a3]" />
          </div>
          <div>
            <Smudge className="mt-0.5 h-2 w-26 bg-[#9a9ca2]" />
            <Smudge className="mt-2.5 h-2 w-11 bg-[#a0a2a8]" />
            <Smudge className="mt-7 h-3 w-26 bg-[#9a9ca2]" />
            <Smudge className="mt-1 h-2 w-11 bg-[#b9bbbf]" />
          </div>
        </div>
        <div className="h-20 bg-linear-to-r from-[#e6eff5] to-transparent to-8% pl-8">
          <div className="flex justify-between pt-0.5 pr-3">
            <Smudge className="h-2.5 w-26 bg-[#a8abb0]" />
            <Smudge className="h-2 w-16 bg-[#d3d6da]" />
          </div>
          <Smudge className="mt-10 h-2.5 w-16 bg-[#d8dbdf]" />
          <Smudge className="mt-2 h-2.5 w-18 bg-[#b7babe]" />
        </div>
      </div>
      <div className="absolute top-0 right-[60px] left-0 h-1 bg-[#9fd2e5] opacity-70 blur-[1px]" />
    </div>
  );
}

export default function App() {
  return (
    <div className="relative min-h-screen pt-[81px] pr-[87px] pb-10 pl-[148px] font-['Open_Sans','Noto_Sans',sans-serif] text-[11px] leading-4 text-black">
      <Backdrop />
      <main className="relative overflow-hidden rounded-xs border-4 border-[#f50505] bg-[#efefef] shadow-[0_0_8px_#0006]">
        <TitleBar />
        <div className="bg-linear-to-b from-white to-[#eee]">
          <MenuBar />
          <StandardToolbar />
          <FormattingToolbar />
        </div>
        <div className="flex">
          <div className="flex min-w-0 flex-1 flex-col">
            <FormulaBar />
            <div className="flex h-[209px]">
              <Sheet />
              <VerticalScroll />
            </div>
            <HorizontalScroll />
            <SheetTabs />
          </div>
          <div className="flex w-[7px] shrink-0 items-center border-x border-[#a0a0a0] bg-[#efefef]">
            <button type="button" aria-label="Скрыть боковую панель" className="flex h-[73px] w-full items-center bg-[#696969]">
              <svg viewBox="0 0 5 8" className="h-2 w-[5px]" aria-hidden="true"><path d="M0 0l5 4-5 4z" fill="#fff" /></svg>
            </button>
          </div>
          <Sidebar />
        </div>
        <FindBar />
        <StatusBar />
      </main>
    </div>
  );
}
